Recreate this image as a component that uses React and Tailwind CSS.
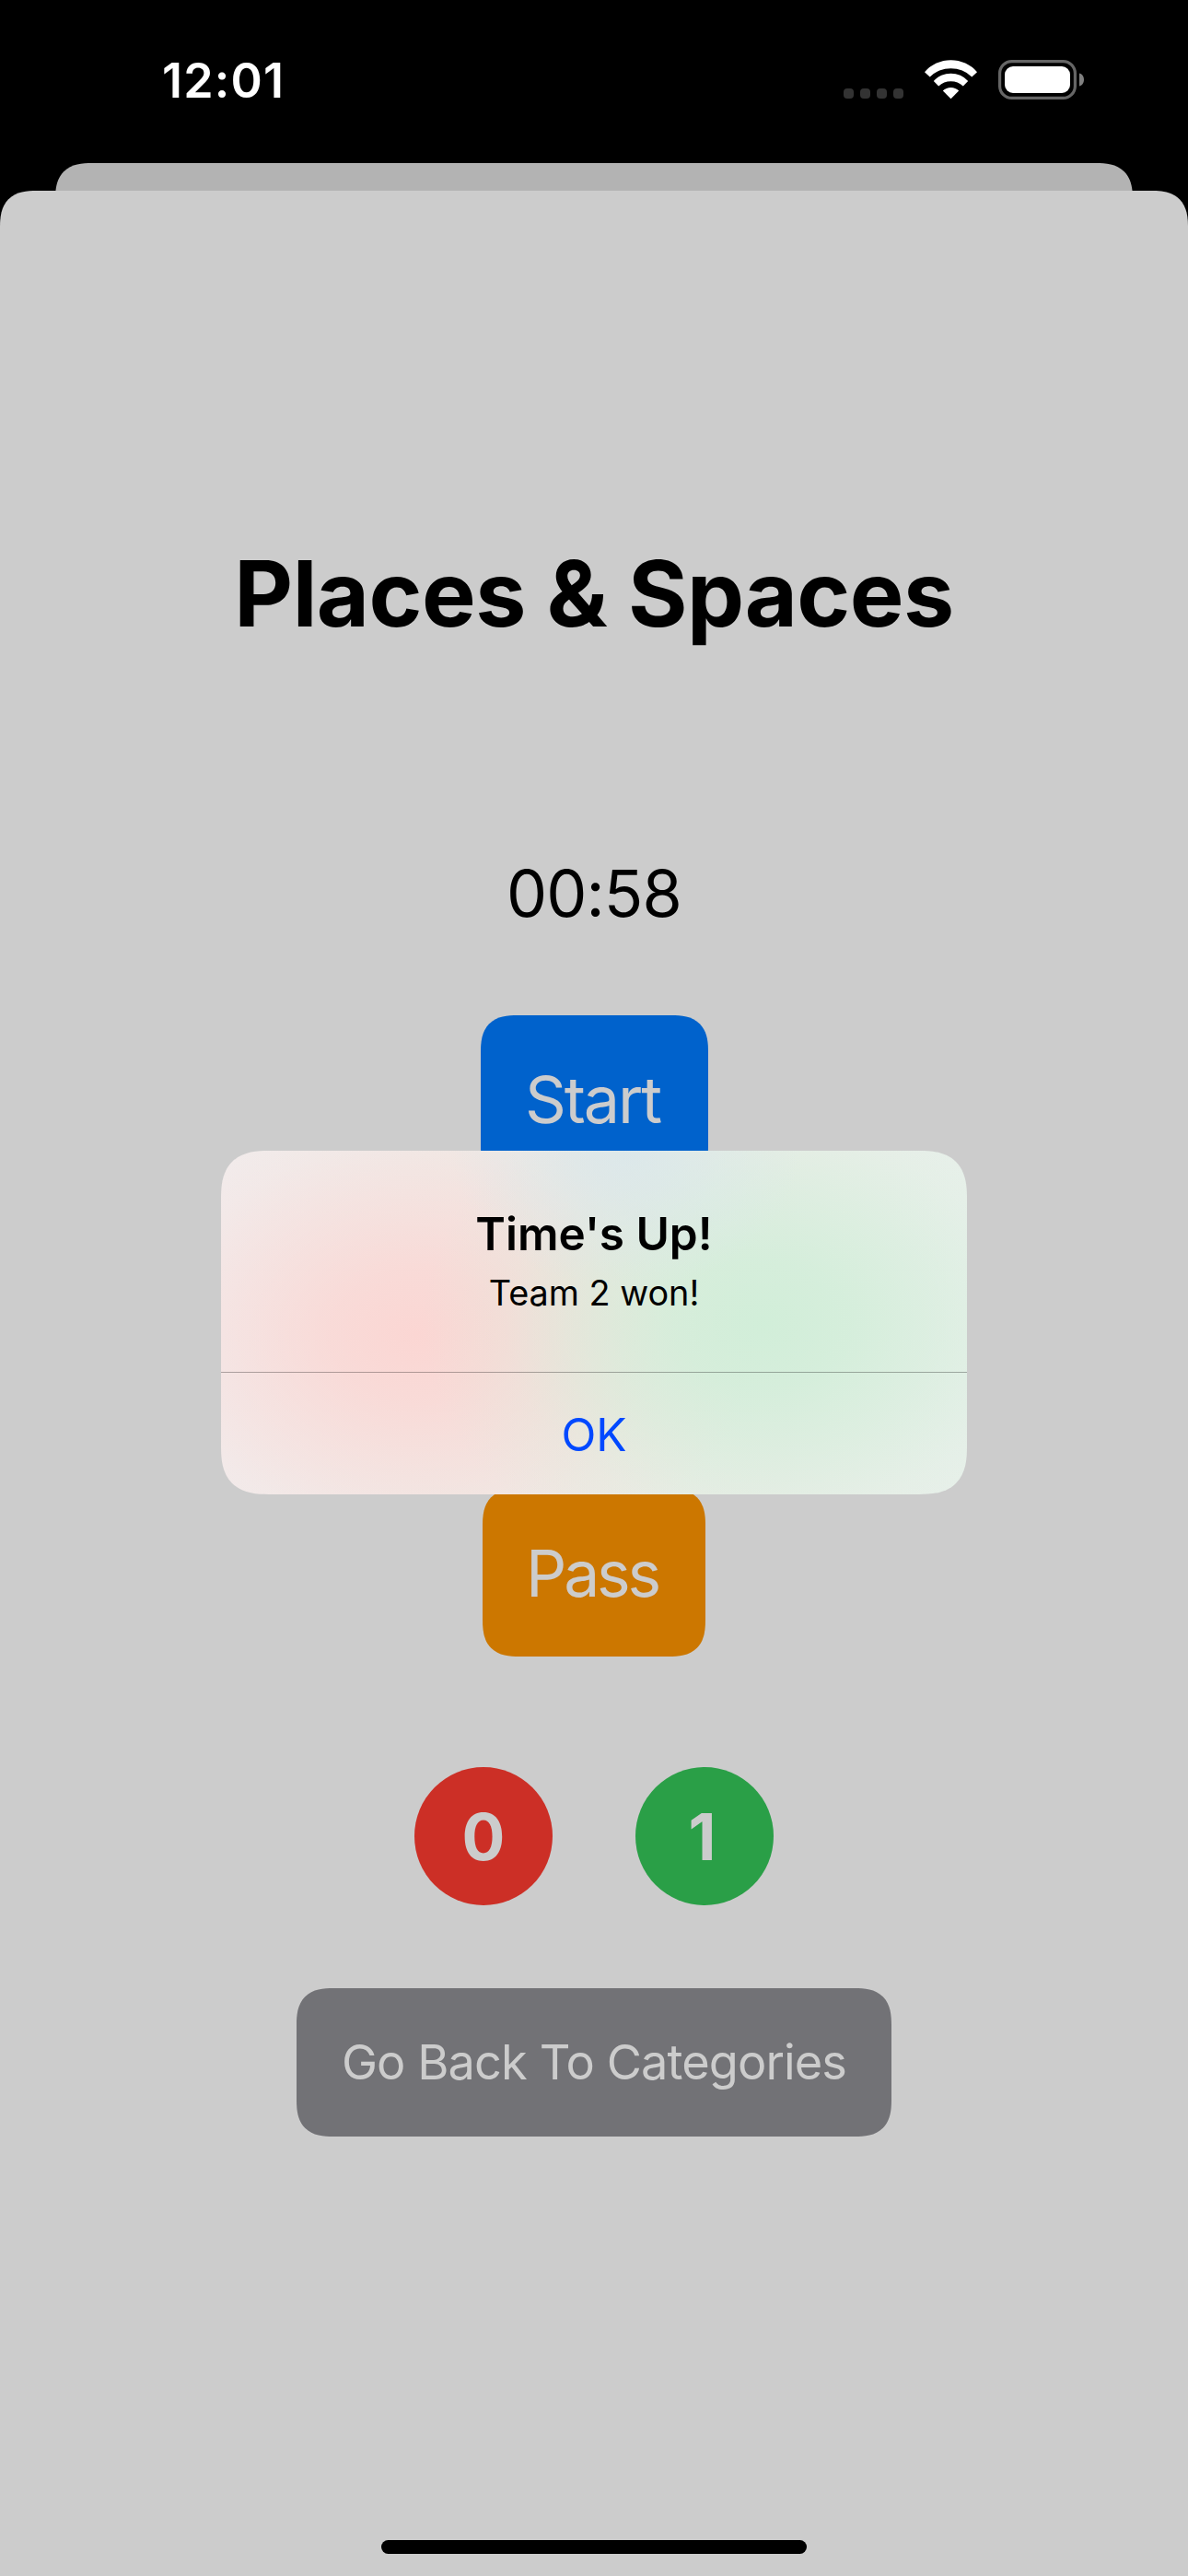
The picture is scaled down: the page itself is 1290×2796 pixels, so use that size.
function StatusBar() {
  return (
    <div className="flex h-[177px] items-start justify-between pl-[176px] pr-[113px] text-white">
      <span className="mt-[58px] text-[52px] leading-[60px] font-semibold tracking-[1.2px]">12:01</span>
      <div className="mt-[65px] flex h-[43px] items-start">
        <div className="mt-[31px] flex gap-[7px]">
          <span className="size-[11px] rounded-[4px] bg-[#333333]" />
          <span className="size-[11px] rounded-[4px] bg-[#333333]" />
          <span className="size-[11px] rounded-[4px] bg-[#333333]" />
          <span className="size-[11px] rounded-[4px] bg-[#333333]" />
        </div>
        <svg className="ml-[23px] h-[43px] w-[58px]" viewBox="0 0 58 43" fill="#fff">
          <path d="M0 13.2A37.7 37.7 0 0 1 57 13.2L51.3 18.5A32.6 32.6 0 0 0 5.7 18.5Z" />
          <path d="M9.8 23A25.2 25.2 0 0 1 47.2 23L41.8 28.5A19.6 19.6 0 0 0 15.2 28.5Z" />
          <path d="M19.8 33.4A12.5 12.5 0 0 1 37.2 33.4L28.5 42.3Z" />
        </svg>
        <svg className="ml-[22px] h-[43px] w-[93px]" viewBox="0 0 93 43">
          <rect x="1.6" y="1.6" width="81.8" height="39.8" rx="13" fill="none" stroke="#666" strokeWidth="3.2" />
          <rect x="7" y="7" width="71" height="29" rx="9" fill="#fff" />
          <path d="M88 14.5C91.500 15.500 93 18.500 93 21.500C93 24.500 91.500 27.500 88 28.500Z" fill="#808080" />
        </svg>
      </div>
    </div>
  );
}

const corner =
  "rounded-[33px] supports-[corner-shape:squircle]:rounded-[40px] supports-[corner-shape:squircle]:[corner-shape:superellipse(1.4)]";
const topCorner =
  "rounded-t-[33px] supports-[corner-shape:squircle]:rounded-t-[40px] supports-[corner-shape:squircle]:[corner-shape:superellipse(1.4)]";
const alertCorner =
  "rounded-[42px] supports-[corner-shape:squircle]:rounded-[52px] supports-[corner-shape:squircle]:[corner-shape:superellipse(1.4)]";

function Alert() {
  return (
    <div
      className={`absolute top-[1249px] left-[240px] flex h-[373px] w-[810px] flex-col overflow-hidden text-center bg-[radial-gradient(ellipse_190px_150px_at_440px_0px,#d9e7eccc,#d9e7ec99_30%,#d9e7ec55_60%,#d9e7ec00),radial-gradient(ellipse_370px_280px_at_588px_188px,#d0eed8f2,#d0eed8cc_25%,#d0eed880_50%,#d0eed82b_75%,#d0eed800),radial-gradient(ellipse_370px_280px_at_212px_200px,#fbd6d3,#fbd6d3cc_25%,#fbd6d37a_50%,#fbd6d32b_75%,#fbd6d300),linear-gradient(90deg,#f1eded,#edebe5_50%,#e9f0eb)] ${alertCorner}`}
    >
      <h2 className="mt-[60px] h-[60px] text-[49.5px] leading-[60px] font-semibold">Time's Up!</h2>
      <p className="mt-[9px] h-[50px] text-[37.8px] leading-[50px]">Team 2 won!</p>
      <div className="mt-[61px] h-px bg-black/30" />
      <button className="flex h-[132px] items-center justify-center pt-[2px] text-[49.5px] leading-[60px] text-[#0048ff]">
        OK
      </button>
    </div>
  );
}

export default function App() {
  return (
    <div className="relative flex h-[2796px] w-[1290px] flex-col overflow-hidden bg-black font-['Inter',sans-serif]">
      <StatusBar />
      <div className="mx-[60px] h-[30px] overflow-hidden">
        <div className={`h-[90px] bg-[#b3b3b3] ${topCorner}`} />
      </div>
      <main className={`flex flex-1 flex-col items-center bg-[#cccccc] ${topCorner}`}>
        <h1 className="mt-[377px] h-[120px] text-[98.6px] leading-[120px] font-bold tracking-[-0.55px]">Places &amp; Spaces</h1>
        <div className="mt-[223px] h-[86px] text-[70px] leading-[86px] tracking-[-0.9px]">00:58</div>
        <button className={`mt-[89px] flex h-[182px] w-[247px] items-center justify-center bg-[#0062cc] pr-[3px] text-[70px] tracking-[-2.2px] text-[#cccccc] ${corner}`}>
          Start
        </button>
        <button className={`mt-[332px] flex h-[182px] w-[242px] items-center justify-center bg-[#cc7700] pt-[2px] pr-[4px] text-[69.5px] tracking-[-3.2px] text-[#cccccc] ${corner}`}>
          Pass
        </button>
        <div className="mt-[120px] flex gap-[90px] text-[69.5px] font-bold text-[#cccccc]">
          <div className="flex size-[150px] items-center justify-center rounded-full bg-[#cc2f26] pt-[2px]">0</div>
          <div className="flex size-[150px] items-center justify-center rounded-full bg-[#2a9f47] pt-[2px] pr-[5px]">1</div>
        </div>
        <button className={`mt-[90px] flex h-[161px] w-[646px] items-center justify-center bg-[#727276] text-[52.3px] tracking-[-0.9px] text-[#cccccc] ${corner}`}>
          Go Back To Categories
        </button>
        <div className="mt-auto mb-[24px] h-[15px] w-[462px] rounded-full bg-black" />
      </main>
      <Alert />
    </div>
  );
}
